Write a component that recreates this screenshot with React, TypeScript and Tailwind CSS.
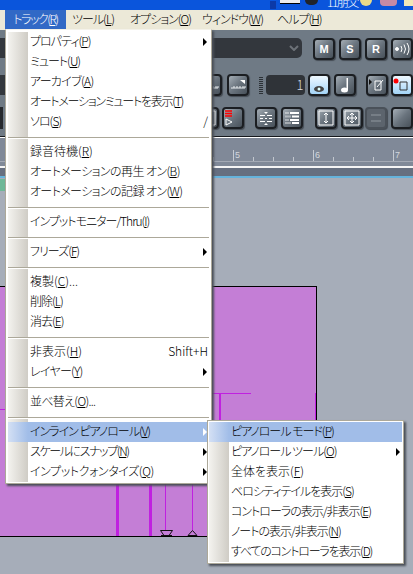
import type { ReactNode } from "react";

type Entry = { label?: string; key?: string; tail?: string; shortcut?: string; sub?: boolean; active?: boolean; t?: string };

const trackMenu: Entry[] = [
  { label: "プロパティ(", key: "P", tail: ")", sub: true },
  { label: "ミュート(", key: "U", tail: ")" },
  { label: "アーカイブ(", key: "A", tail: ")", t: "tracking-[-0.7px]" },
  { label: "オートメーションミュートを表示(", key: "T", tail: ")", t: "tracking-[-1.25px]" },
  { label: "ソロ(", key: "S", tail: ")", shortcut: "/" },
  {},
  { label: "録音待機(", key: "R", tail: ")", t: "tracking-normal" },
  { label: "オートメーションの再生 オン(", key: "B", tail: ")", t: "tracking-[-0.6px]" },
  { label: "オートメーションの記録 オン(", key: "W", tail: ")", t: "tracking-[-0.6px]" },
  {},
  { label: "インプットモニター/Thru(", key: "I", tail: ")" },
  {},
  { label: "フリーズ(", key: "F", tail: ")", sub: true },
  {},
  { label: "複製(", key: "C", tail: ")...", t: "tracking-normal" },
  { label: "削除(", key: "L", tail: ")" },
  { label: "消去(", key: "E", tail: ")" },
  {},
  { label: "非表示(", key: "H", tail: ")", shortcut: "Shift+H", t: "tracking-normal" },
  { label: "レイヤー(", key: "Y", tail: ")", sub: true, t: "tracking-[-0.7px]" },
  {},
  { label: "並べ替え(", key: "O", tail: ")...", t: "tracking-[-0.7px]" },
  {},
  { label: "インライン ピアノロール(", key: "V", tail: ")", sub: true, active: true },
  { label: "スケールにスナップ(", key: "N", tail: ")", sub: true, t: "tracking-[-1.4px]" },
  { label: "インプットクォンタイズ(", key: "Q", tail: ")", sub: true, t: "tracking-[-0.4px]" },
];

const pianoMenu: Entry[] = [
  { label: "ピアノロール モード(", key: "P", tail: ")", active: true },
  { label: "ピアノロール ツール(", key: "O", tail: ")", sub: true },
  { label: "全体を表示(", key: "F", tail: ")", t: "tracking-normal" },
  { label: "ベロシティテイルを表示(", key: "S", tail: ")" },
  { label: "コントローラの表示/非表示(", key: "E", tail: ")" },
  { label: "ノートの表示/非表示(", key: "N", tail: ")" },
  { label: "すべてのコントローラを表示(", key: "D", tail: ")", t: "tracking-[-1.2px]" },
];

const topMenus = [
  ["ツール(", "L", "w-[58px]"],
  ["オプション(", "O", "w-[72px]"],
  ["ウィンドウ(", "W", "w-[75px]"],
  ["ヘルプ(", "H", "w-[60px]"],
];

function Gutter({ h }: { h: string }) {
  return <div className={`w-5 ${h} bg-gradient-to-r from-[#f4f3ef] to-[#cfccc5]`} />;
}

function MenuRow({ entry }: { entry: Entry }) {
  if (!entry.label) {
    return (
      <div className="h-[10px] flex flex-col">
        <Gutter h="h-[5px]" />
        <div className="w-full h-[1px] bg-[#aca899]" />
        <div className="h-[1px]" />
        <Gutter h="h-[3px]" />
      </div>
    );
  }
  return (
    <div className={`h-5 flex items-center ${entry.active ? "bg-[#a1bde8]" : ""}`}>
      <div
        className={`w-5 h-full shrink-0 bg-gradient-to-r ${
          entry.active ? "from-[#d4e0f4] to-[#a1bde8]" : "from-[#f4f3ef] to-[#cfccc5]"
        }`}
      />
      <span
        className={`pl-[2px] pb-[2px] text-[12px] leading-none font-light text-black whitespace-nowrap [font-feature-settings:'palt'] ${
          entry.t ?? "tracking-[-1px]"
        }`}
      >
        {entry.label}
        <span className="underline">{entry.key}</span>
        {entry.tail}
      </span>
      <div className="ml-auto flex items-center">
        {entry.shortcut && <span className="text-[12px] pb-[2px] font-light text-black pr-[1px]">{entry.shortcut}</span>}
        {entry.sub && (
          <div
            className={`w-0 h-0 mr-[2px] border-y-[4px] border-y-transparent border-l-[4px] ${
              entry.active ? "border-l-white" : "border-l-black"
            }`}
          />
        )}
      </div>
    </div>
  );
}

function ToolBtn({ children, blue, off }: { children?: ReactNode; blue?: boolean; off?: boolean }) {
  return (
    <div
      className={`w-[22px] h-[22px] shrink-0 rounded-[4px] border-2 border-[#1b1e22] flex items-center justify-center shadow-[1px_1px_1px_#444b53] text-white text-[11px] font-bold font-['Liberation_Sans',sans-serif] ${
        blue
          ? "bg-gradient-to-b from-[#eef8ff] to-[#a3d4f7]"
          : off
            ? "bg-[#5c646d] border-[#4a5159]"
            : "bg-gradient-to-br from-[#a5aeb6] via-[#6a747e] to-[#48515a]"
      }`}
    >
      {children}
    </div>
  );
}

function Ruler() {
  const ticks = Array.from({ length: 11 }, (_, i) => i);
  return (
    <div className="h-[30px] bg-[#808998] relative overflow-hidden">
      <div className="absolute left-0 right-0 top-[23px] h-[1px] bg-[#a3a9b4]" />
      {ticks.map((i) => (
        <div key={i} className="absolute top-[19px] w-[1px] bg-[#c2c7ce] h-[4px]" style={{ left: 213 + i * 20 }} />
      ))}
      {[5, 6, 7].map((n, i) => (
        <div
          key={n}
          className="absolute top-[12px] h-[11px] border-l border-[#c6cbd2] pl-[1px] text-[9px] leading-[10px] text-[#d4d8dd] font-['Liberation_Sans',sans-serif]"
          style={{ left: 233 + i * 80 }}
        >
          {n}
        </div>
      ))}
      <div className="absolute left-0 right-0 bottom-0 h-[2px] bg-[#f4f4f4]" />
    </div>
  );
}

export default function App() {
  return (
    <div className="w-[413px] h-[574px] relative overflow-hidden bg-[#a6adb9] font-['Noto_Sans_CJK_JP','Liberation_Sans',sans-serif]">
      {/* Title bar */}
      <div className="h-[10px] bg-[#0a55dc] flex items-start pl-[270px] overflow-hidden">
        <div className="w-[6px] h-[8px] mt-[1px] bg-[#0c3aa8] shrink-0" />
        <div className="w-[20px] h-[4px] ml-[4px] bg-[#ececec] border-b border-black shrink-0" />
        <div className="w-[13px] h-[5px] ml-[5px] bg-[#20242a] rounded-b-md shrink-0" />
        <div className="w-[30px] h-[10px] ml-[9px] shrink-0 text-[12px] leading-[12px] -mt-[4px] tracking-[-1.5px] text-white whitespace-nowrap font-light">11朋父</div>
        <div className="w-[12px] h-[6px] ml-[3px] bg-[#e9dc8a] rounded-b-full shrink-0" />
        <div className="w-[17px] h-[6px] ml-[8px] bg-[#c68aa6] rounded-b-sm shrink-0" />
        <div className="w-[9px] h-[6px] ml-[7px] bg-[#f1e7b8] shrink-0" />
      </div>

      {/* Menu bar */}
      <div className="h-5 bg-[#ece9d8] flex text-[12px] font-light text-black [font-feature-settings:'palt'] tracking-[-1px]">
        <div className="w-[5px]" />
        <div className="w-[61px] pb-[2px] bg-[#3169c6] text-white flex items-center justify-center tracking-[-1.5px]">
          トラック(<span className="underline">R</span>)
        </div>
        <div className="w-[6px]" />
        {topMenus.map(([name, key, w]) => (
          <div key={key} className={`${w} pb-[2px] flex items-center`}>
            {name}
            <span className="underline">{key}</span>)
          </div>
        ))}
      </div>

      {/* Toolbars */}
      <div className="h-[107px] bg-[#6f7a85] flex flex-col pt-2 border-b border-[#15181c]">
        <div className="flex items-start">
          <div className="w-[304px] h-[20px] bg-[#33373d] rounded-r-[5px] flex items-center justify-end pr-[3px]">
            <svg width="10" height="6" viewBox="0 0 10 6">
              <path d="M1 1l4 4 4-4" fill="none" stroke="#6d7278" strokeWidth="2" />
            </svg>
          </div>
          <div className="w-[11px]" />
          <div className="flex gap-1">
            <ToolBtn>M</ToolBtn>
            <ToolBtn>S</ToolBtn>
            <ToolBtn>R</ToolBtn>
            <ToolBtn>
              <svg width="16" height="12" viewBox="0 0 16 12" fill="none" stroke="#fff">
                <circle cx="3" cy="6" r="1.5" fill="#fff" />
                <path d="M7 3q2 3 0 6M10 1.5q3 4.500 0 9M13 0q4 6 0 12" />
              </svg>
            </ToolBtn>
          </div>
        </div>

        <div className="flex items-center mt-[14px]">
          <div className="w-[5px] h-[20px] bg-[#33373d]" />
          <div className="w-[200px]" />
          <ToolBtn>
            <svg width="16" height="12" viewBox="0 0 16 12" fill="none" stroke="#e8ecef">
              <path d="M1 9h14v-2M4 9v-2M7 9v-2M10 9v-2M13 9v-2" />
            </svg>
          </ToolBtn>
          <div className="w-[5px]" />
          <ToolBtn>
            <svg width="16" height="12" viewBox="0 0 16 12" fill="none" stroke="#e8ecef">
              <path d="M1 9h14v-2M4 9v-2M7 9v-2M10 9v-2M13 9v-2" />
              <path d="M10 1h5v4z" fill="#fff" stroke="none" />
            </svg>
          </ToolBtn>
          <div className="w-[10px]" />
          <div className="w-[5px] h-[18px] bg-[repeating-linear-gradient(0deg,#2c3136_0,#2c3136_1px,transparent_1px,transparent_2px)]" />
          <div className="w-[3px]" />
          <div className="w-[40px] h-[20px] bg-[#2f3338] rounded-[4px] text-right pr-[2px] text-[13px] font-light leading-[20px] text-[#d6dade]">1</div>
          <div className="w-[3px]" />
          <ToolBtn blue>
            <svg width="12" height="8" viewBox="0 0 12 8" className="mt-2">
              <ellipse cx="6" cy="4" rx="5" ry="3" fill="#444" />
              <circle cx="6" cy="4" r="1.500" fill="#dff" />
            </svg>
          </ToolBtn>
          <div className="w-[4px]" />
          <ToolBtn>
            <svg width="12" height="16" viewBox="0 0 12 16" fill="#fff">
              <rect x="7.500" y="1" width="1.500" height="12" />
              <ellipse cx="5.500" cy="13" rx="3.500" ry="2.500" />
            </svg>
          </ToolBtn>
          <div className="w-[10px]" />
          <ToolBtn>
            <svg width="18" height="14" viewBox="0 0 18 14" fill="none" stroke="#fff">
              <path d="M1 1v6l3-3z" fill="#111" stroke="none" />
              <path d="M7 3h6v9H7zM9 9l6-7" />
            </svg>
          </ToolBtn>
          <div className="w-[3px]" />
          <ToolBtn blue>
            <svg width="18" height="14" viewBox="0 0 18 14" fill="none" stroke="#333">
              <circle cx="3" cy="3" r="2.500" fill="#f00" stroke="none" />
              <path d="M7 4h7v8H7z" />
            </svg>
          </ToolBtn>
        </div>

        <div className="flex items-center mt-[11px]">
          <div className="w-[3px] h-[22px] bg-[#26292e]" />
          <div className="w-[210px]" />
          <ToolBtn>
            <svg width="16" height="16" viewBox="0 0 16 16" fill="none" stroke="#fff">
              <path d="M1 1h14v14H1zM4 13V9M6.500 13V5M9 13V7M11.500 13V8" />
            </svg>
          </ToolBtn>
          <div className="w-[3px]" />
          <ToolBtn>
            <svg width="18" height="16" viewBox="0 0 18 16" fill="none">
              <path d="M1 1h7M1 3.500h7M1 6h7" stroke="#f00" strokeWidth="1.500" />
              <path d="M2 9l6 3-6 3z" stroke="#fff" />
            </svg>
          </ToolBtn>
          <div className="w-[12px]" />
          <ToolBtn>
            <svg width="16" height="16" viewBox="0 0 16 16" fill="none" stroke="#fff">
              <path d="M2 5.500h5M9 5.500h5M2 8.500h3M7 8.500h2M11 8.500h3M2 11.500h5M9 11.500h5" />
              <path d="M6 2h4L8 4zM6 15h4l-2-2z" fill="#fff" stroke="none" />
            </svg>
          </ToolBtn>
          <div className="w-[4px]" />
          <ToolBtn>
            <svg width="16" height="14" viewBox="0 0 16 14" fill="#fff">
              <path d="M1 1h4v2H1zM1 4.500h6v2H1zM1 8h4v2H1zM1 11h6v2H1z" fillOpacity="0.4" />
              <path d="M6 1h9v2H6zM8 4.500h7v2H8zM6 8h9v2H6zM8 11h7v2H8z" />
            </svg>
          </ToolBtn>
          <div className="w-[13px]" />
          <ToolBtn>
            <svg width="16" height="16" viewBox="0 0 16 16" fill="none" stroke="#fff">
              <path d="M1 1h14v14H1zM8 3v10M6 5l2-2 2 2M6 11l2 2 2-2" />
            </svg>
          </ToolBtn>
          <div className="w-[4px]" />
          <ToolBtn>
            <svg width="16" height="16" viewBox="0 0 16 16" fill="none" stroke="#fff">
              <path d="M1 1h14v14H1zM8 3v10M3 8h10M6 5l2-2 2 2M6 11l2 2 2-2M5 6L3 8l2 2M11 6l2 2-2 2" />
            </svg>
          </ToolBtn>
          <div className="w-[3px]" />
          <ToolBtn off>
            <div className="w-[10px] h-[8px] border-y-2 border-[#767e86]" />
          </ToolBtn>
          <div className="w-[4px]" />
          <ToolBtn />
        </div>
      </div>
      <div className="h-[1px] bg-white" />

      <Ruler />
      <div className="h-[8px] bg-[#666f80]" />
      <div className="h-[2px] bg-[#65b3dc]" />

      {/* Clip area */}
      <div className="h-[108px] relative">
        <div className="absolute left-0 top-[1px] w-[5px] h-[12px] bg-[#6fb898]" />
      </div>
      <div className="w-[317px] h-[251px] bg-[#c47ed6] border-t border-b border-r border-black relative">
        <div className="absolute left-0 top-[122px] w-[5px] h-[1px] bg-[#c020e0]" />
        <div className="absolute left-[212px] top-[106px] w-[39px] h-[1px] bg-[#c020e0]" />
        <div className="absolute left-[219px] top-[106px] w-[2px] h-[28px] bg-[#c020e0]" />
        <div className="absolute left-[315px] top-[106px] w-[1px] h-[28px] bg-[#c020e0]" />
        <div className="absolute left-[116px] top-[197px] w-[3px] h-[52px] bg-[#c020e0]" />
        <div className="absolute left-[149px] top-[197px] w-[3px] h-[52px] bg-[#c020e0]" />
        <div className="absolute left-[165px] top-[197px] w-[1px] h-[46px] bg-[#c020e0]" />
        <div className="absolute left-[192px] top-[197px] w-[1px] h-[46px] bg-[#c020e0]" />
        <svg className="absolute left-[160px] top-[243px]" width="40" height="6" viewBox="0 0 40 6" fill="none" stroke="#111">
          <path d="M0.500 0.500h12L9 5.500H4zM1 5.500h11M28 5.500l4.500-5 4.500 5z" />
        </svg>
      </div>

      {/* Track menu */}
      <div className="absolute left-[5px] top-[29px] w-[207px] h-[455px] bg-white border border-[#aca899] border-t-[#f4f2ea] pt-[2px] px-[2px] pb-[1px] shadow-[2px_2px_2px_#4a4f57]">
        {trackMenu.map((entry, i) => (
          <MenuRow key={i} entry={entry} />
        ))}
      </div>

      {/* Piano roll submenu */}
      <div className="absolute left-[207px] top-[420px] w-[197px] h-[144px] bg-white border border-[#aca899] p-[1px] shadow-[2px_2px_2px_#4a4f57]">
        {pianoMenu.map((entry, i) => (
          <MenuRow key={i} entry={entry} />
        ))}
      </div>
    </div>
  );
}
